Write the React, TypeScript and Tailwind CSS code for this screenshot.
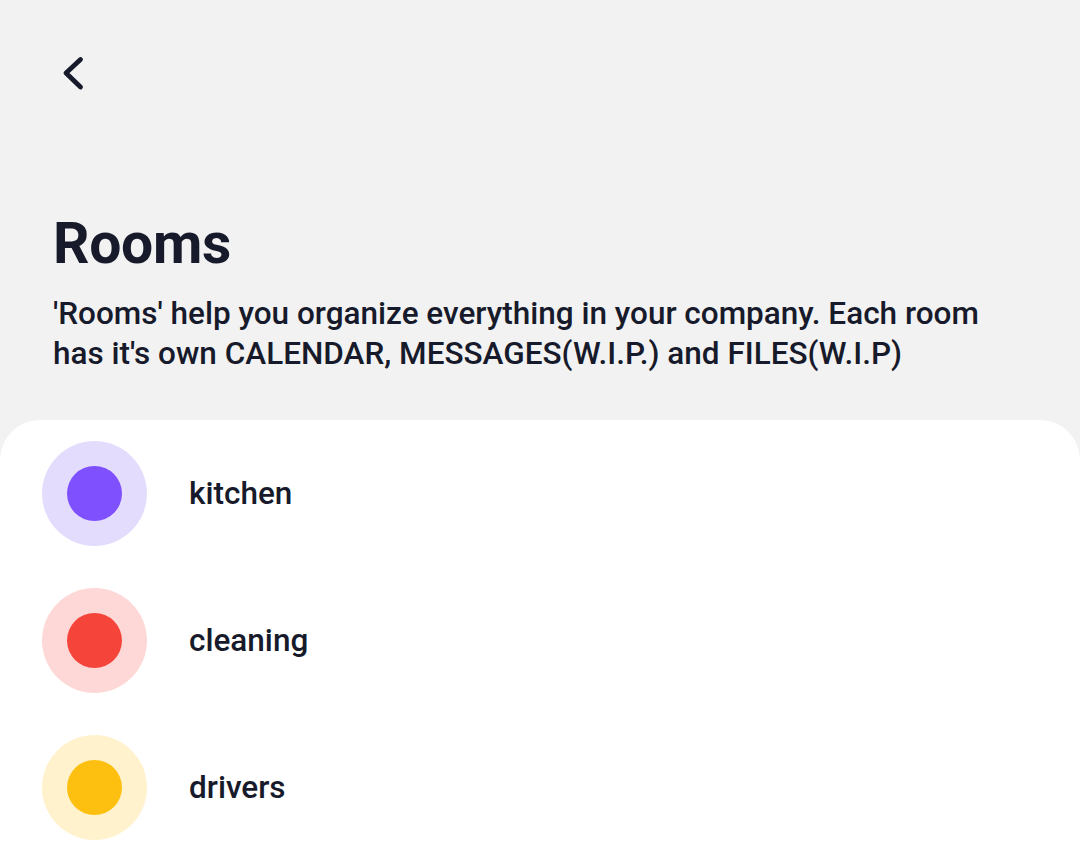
import React from "react";

const rooms = [
  { name: "kitchen", ring: "bg-[#e4dcfd]", dot: "bg-[#7f50fd]" },
  { name: "cleaning", ring: "bg-[#fdd8d6]", dot: "bg-[#f5443a]" },
  { name: "drivers", ring: "bg-[#fff2cd]", dot: "bg-[#fec010]" },
];

export default function App() {
  return (
    <div className="w-[1080px] h-[856px] overflow-hidden bg-[#f2f2f3] flex flex-col font-['Roboto',sans-serif] text-[#171a2a]">
      {/* header */}
      <div className="h-[420px] shrink-0 flex flex-col px-[53px]">
        <div className="pt-[52px] h-[212px]">
          <svg width="32" height="42" viewBox="0 0 32 42" className="ml-[5px]" fill="none" stroke="#171a2a" strokeWidth="4.8" strokeLinecap="round" strokeLinejoin="round">
            <path d="M22.5 7.5L8 21l14.5 14" />
          </svg>
        </div>
        <h1 className="text-[57px] leading-[64px] font-bold tracking-[-0.3px]">Rooms</h1>
        <p className="mt-[18px] w-[945px] text-[31.5px] leading-[40px] font-medium">
          'Rooms' help you organize everything in your company. Each room has it's own CALENDAR, MESSAGES(W.I.P.) and FILES(W.I.P)
        </p>
      </div>

      {/* list */}
      <div className="flex-1 bg-white rounded-t-[40px] pt-[21px] px-[42px]">
        {rooms.map((r) => (
          <div key={r.name} className="h-[147px] flex items-start">
            <div className={`w-[105px] h-[105px] rounded-full flex items-center justify-center ${r.ring}`}>
              <div className={`w-[55px] h-[55px] rounded-full ${r.dot}`} />
            </div>
            <span className="ml-[42px] h-[105px] flex items-center text-[31.5px] font-medium">{r.name}</span>
          </div>
        ))}
      </div>
    </div>
  );
}
